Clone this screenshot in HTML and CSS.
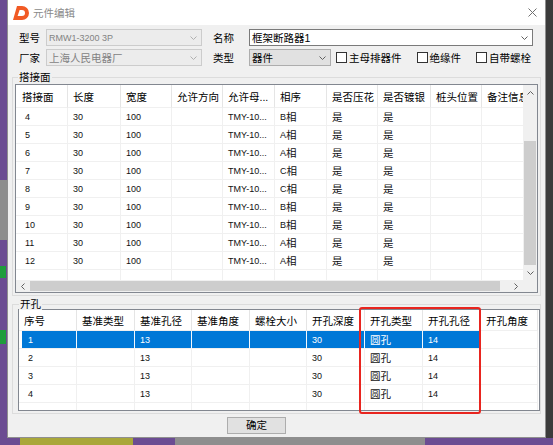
FILE: index.html
```html
<!DOCTYPE html>
<html>
<head>
<meta charset="utf-8">
<link rel="stylesheet" href="styles.css">
</head>
<body>
<div class="desktop">
  <div class="mark mark1"></div>
  <div class="mark mark2"></div>
  <div class="dialog">
    <div class="titlebar">
      <svg class="logo" width="16" height="14" viewBox="0 0 16 14"><path fill="#f15a24" fill-rule="evenodd" d="M4 0 H9 A7 7 0 0 1 9 14 H0 Z M6.6 4 H9 A3 3 0 0 1 9 10 H4.6 Z"/></svg>
      <span class="title">元件编辑</span>
      <svg class="close" width="9" height="9" viewBox="0 0 9 9"><path d="M0.5 0.5 L8.5 8.5 M8.5 0.5 L0.5 8.5" stroke="#707070" stroke-width="1" fill="none"/></svg>
    </div>

    <div class="form">
      <div class="frow">
        <span class="lbl">型号</span>
        <div class="combo dis w156"><span class="ctext n">RMW1-3200 3P</span><svg class="arrow" width="7" height="4" viewBox="0 0 7 4"><path d="M0.5 0.5 L3.5 3.5 L6.5 0.5" stroke="#b0b0b0" fill="none"/></svg></div>
        <span class="lbl lbl2">名称</span>
        <div class="combo edit w284"><span class="ctext">框架断路器1</span><svg class="arrow" width="7" height="4" viewBox="0 0 7 4"><path d="M0.5 0.5 L3.5 3.5 L6.5 0.5" stroke="#606060" fill="none"/></svg></div>
      </div>
      <div class="frow">
        <span class="lbl">厂家</span>
        <div class="combo dis w156"><span class="ctext">上海人民电器厂</span><svg class="arrow" width="7" height="4" viewBox="0 0 7 4"><path d="M0.5 0.5 L3.5 3.5 L6.5 0.5" stroke="#b0b0b0" fill="none"/></svg></div>
        <span class="lbl lbl2">类型</span>
        <div class="combo drop w82"><span class="ctext">器件</span><svg class="arrow" width="7" height="4" viewBox="0 0 7 4"><path d="M0.5 0.5 L3.5 3.5 L6.5 0.5" stroke="#606060" fill="none"/></svg></div>
        <div class="checks">
          <label class="chk"><span class="box"></span>主母排器件</label>
          <label class="chk"><span class="box"></span>绝缘件</label>
          <label class="chk"><span class="box"></span>自带螺栓</label>
        </div>
      </div>
    </div>

    <div class="group g1">
      <span class="legend">搭接面</span>
      <div class="list1">
        <div class="viewport">
          <div class="r hdr">
            <div class="c c1">搭接面</div><div class="c">长度</div><div class="c">宽度</div><div class="c">允许方向</div><div class="c">允许母...</div><div class="c">相序</div><div class="c">是否压花</div><div class="c">是否镀银</div><div class="c">桩头位置</div><div class="c">备注信息</div>
          </div>
          <div class="r"><div class="c c1 n">4</div><div class="c n">30</div><div class="c n">100</div><div class="c"></div><div class="c n">TMY-10...</div><div class="c"><span class="n">B</span>相</div><div class="c">是</div><div class="c">是</div><div class="c"></div><div class="c"></div></div>
          <div class="r"><div class="c c1 n">5</div><div class="c n">30</div><div class="c n">100</div><div class="c"></div><div class="c n">TMY-10...</div><div class="c"><span class="n">A</span>相</div><div class="c">是</div><div class="c">是</div><div class="c"></div><div class="c"></div></div>
          <div class="r"><div class="c c1 n">6</div><div class="c n">30</div><div class="c n">100</div><div class="c"></div><div class="c n">TMY-10...</div><div class="c"><span class="n">A</span>相</div><div class="c">是</div><div class="c">是</div><div class="c"></div><div class="c"></div></div>
          <div class="r"><div class="c c1 n">7</div><div class="c n">30</div><div class="c n">100</div><div class="c"></div><div class="c n">TMY-10...</div><div class="c"><span class="n">C</span>相</div><div class="c">是</div><div class="c">是</div><div class="c"></div><div class="c"></div></div>
          <div class="r"><div class="c c1 n">8</div><div class="c n">30</div><div class="c n">100</div><div class="c"></div><div class="c n">TMY-10...</div><div class="c"><span class="n">C</span>相</div><div class="c">是</div><div class="c">是</div><div class="c"></div><div class="c"></div></div>
          <div class="r"><div class="c c1 n">9</div><div class="c n">30</div><div class="c n">100</div><div class="c"></div><div class="c n">TMY-10...</div><div class="c"><span class="n">B</span>相</div><div class="c">是</div><div class="c">是</div><div class="c"></div><div class="c"></div></div>
          <div class="r"><div class="c c1 n">10</div><div class="c n">30</div><div class="c n">100</div><div class="c"></div><div class="c n">TMY-10...</div><div class="c"><span class="n">B</span>相</div><div class="c">是</div><div class="c">是</div><div class="c"></div><div class="c"></div></div>
          <div class="r"><div class="c c1 n">11</div><div class="c n">30</div><div class="c n">100</div><div class="c"></div><div class="c n">TMY-10...</div><div class="c"><span class="n">A</span>相</div><div class="c">是</div><div class="c">是</div><div class="c"></div><div class="c"></div></div>
          <div class="r"><div class="c c1 n">12</div><div class="c n">30</div><div class="c n">100</div><div class="c"></div><div class="c n">TMY-10...</div><div class="c"><span class="n">A</span>相</div><div class="c">是</div><div class="c">是</div><div class="c"></div><div class="c"></div></div>
          <div class="r"><div class="c c1"></div><div class="c"></div><div class="c"></div><div class="c"></div><div class="c"></div><div class="c"></div><div class="c"></div><div class="c"></div><div class="c"></div><div class="c"></div></div>
        </div>
        <div class="vscroll">
          <div class="sbtn v"><svg width="7" height="4" viewBox="0 0 7 4"><path d="M0.5 3.5 L3.5 0.5 L6.5 3.5" stroke="#606060" fill="none"/></svg></div>
          <div class="vtrack1"></div>
          <div class="vthumb"></div>
          <div class="sbtn v"><svg width="7" height="4" viewBox="0 0 7 4"><path d="M0.5 0.5 L3.5 3.5 L6.5 0.5" stroke="#606060" fill="none"/></svg></div>
        </div>
        <div class="hscroll">
          <div class="sbtn h"><svg width="4" height="7" viewBox="0 0 4 7"><path d="M3.5 0.5 L0.5 3.5 L3.5 6.5" stroke="#606060" fill="none"/></svg></div>
          <div class="hthumb"></div>
          <div class="htrack"></div>
          <div class="sbtn h"><svg width="4" height="7" viewBox="0 0 4 7"><path d="M0.5 0.5 L3.5 3.5 L0.5 6.5" stroke="#606060" fill="none"/></svg></div>
        </div>
        <div class="corner"></div>
      </div>
    </div>

    <div class="group g2">
      <span class="legend">开孔</span>
      <div class="list2">
        <div class="r hdr">
          <div class="c c1">序号</div><div class="c">基准类型</div><div class="c">基准孔径</div><div class="c">基准角度</div><div class="c">螺栓大小</div><div class="c">开孔深度</div><div class="c">开孔类型</div><div class="c">开孔孔径</div><div class="c">开孔角度</div>
        </div>
        <div class="r sel"><div class="c c1 n">1</div><div class="c"></div><div class="c n">13</div><div class="c"></div><div class="c"></div><div class="c n">30</div><div class="c">圆孔</div><div class="c n">14</div><div class="c"></div></div>
        <div class="r"><div class="c c1 n">2</div><div class="c"></div><div class="c n">13</div><div class="c"></div><div class="c"></div><div class="c n">30</div><div class="c">圆孔</div><div class="c n">14</div><div class="c"></div></div>
        <div class="r"><div class="c c1 n">3</div><div class="c"></div><div class="c n">13</div><div class="c"></div><div class="c"></div><div class="c n">30</div><div class="c">圆孔</div><div class="c n">14</div><div class="c"></div></div>
        <div class="r"><div class="c c1 n">4</div><div class="c"></div><div class="c n">13</div><div class="c"></div><div class="c"></div><div class="c n">30</div><div class="c">圆孔</div><div class="c n">14</div><div class="c"></div></div>
        <div class="r"><div class="c c1"></div><div class="c"></div><div class="c"></div><div class="c"></div><div class="c"></div><div class="c"></div><div class="c"></div><div class="c"></div><div class="c"></div></div>
      </div>
    </div>

    <div class="btnrow"><button class="btn">确定</button></div>
  </div>
  <div class="redbox"></div>
</div>
</body>
</html>
```

FILE: styles.css
```css
* { box-sizing: border-box; margin: 0; padding: 0; }
html, body { width: 553px; height: 445px; overflow: hidden; }
body {
  font-family: "Liberation Sans", "Noto Sans CJK SC", sans-serif;
  font-size: 10.5px;
  color: #000;
}
.desktop {
  position: relative;
  width: 553px;
  height: 445px;
  background:
    linear-gradient(to right, #6b4c92 0 20px, #a9a73a 20px 133px, #6b4c92 133px 175px, #8e8e8e 175px 425px, #6b4c92 425px) left bottom / 100% 7px no-repeat,
    linear-gradient(#6b4c92 0 180px, #8d8d8d 180px 240px, #6b4c92 240px) left top / 7px 100% no-repeat,
    #3b3b3b;
}
.mark { position: absolute; left: 0; width: 6px; background: #1f9d3c; }
.mark1 { top: 266px; height: 12px; }
.mark2 { top: 330px; height: 14px; }

.dialog {
  position: absolute;
  left: 7px;
  top: 0;
  width: 539px;
  height: 438px;
  background: #f0f0f0;
  border: 1px solid #8f8f8f;
  border-top: none;
  display: flex;
  flex-direction: column;
}
.titlebar {
  height: 25px;
  background: #fff;
  display: flex;
  align-items: center;
  padding-left: 5px;
  flex: none;
}
.logo { display: block; }
.title { margin-left: 4px; color: #8a8a8a; font-size: 10.5px; }
.close { margin-left: auto; margin-right: 8px; display: block; }

.form {
  margin-top: 4px;
  display: flex;
  flex-direction: column;
  gap: 3px;
  padding-left: 11px;
}
.frow { display: flex; align-items: center; height: 17px; }
.lbl { width: 27px; flex: none; }
.lbl2 { width: 36px; margin-left: 11px; }
.combo {
  height: 17px;
  display: flex;
  align-items: center;
  padding-left: 2px;
  border: 1px solid #7a7a7a;
  flex: none;
  white-space: nowrap;
  overflow: hidden;
}
.combo .arrow { margin-left: auto; margin-right: 4px; flex: none; }
.w156 { width: 156px; }
.w284 { width: 284px; }
.w82 { width: 82px; }
.dis { background: #ececec; border-color: #cccccc; color: #838383; }
.edit { background: #fff; }
.drop { background: #e1e1e1; border-color: #adadad; }

.checks { display: flex; gap: 15px; margin-left: 5px; }
.chk { display: flex; align-items: center; }
.box {
  width: 11px;
  height: 11px;
  border: 1px solid #333;
  background: #fff;
  margin-right: 2px;
}

.group {
  position: relative;
  border: 1px solid #dcdcdc;
  margin-left: 4px;
  width: 529px;
  flex: none;
}
.legend {
  position: absolute;
  top: -7px;
  background: #f0f0f0;
  padding: 0 1px;
  line-height: 12px;
}
.g1 { margin-top: 11px; padding: 6px 2px 2px; height: 219px; }
.g1 .legend { left: 5px; }
.g2 { margin-top: 8px; padding: 4px 0 2px 5px; height: 110px; }
.g2 .legend { left: 6px; }

.n { font-size: 9px; }

.list1 {
  width: 523px;
  height: 209px;
  border: 1px solid #828790;
  background: #fff;
  display: grid;
  grid-template-columns: 507px 14px;
  grid-template-rows: 195px 12px;
}
.viewport { overflow: hidden; }
.r { display: grid; height: 18px; }
.list1 .r { grid-template-columns: 52px 53px 51px 51px 52px 52px 51px 53px 51px 52px; width: 518px; }
.list1 .hdr { height: 23px; }
.c {
  display: flex;
  align-items: center;
  padding-left: 5px;
  white-space: nowrap;
  overflow: hidden;
  border-right: 1px solid #f0f0f0;
  border-bottom: 1px solid #f0f0f0;
  color: #111;
}
.c1 { padding-left: 9px; }
.hdr .c { border-right-color: #e5e5e5; color: #000; }
.hdr .c1 { padding-left: 6px; }

.vscroll { background: #f0f0f0; display: flex; flex-direction: column; }
.sbtn { display: flex; align-items: center; justify-content: center; flex: none; }
.sbtn.v { height: 15px; }
.sbtn.h { width: 14px; }
.vtrack1 { height: 41px; }
.vthumb { height: 124px; background: #cdcdcd; margin: 0 1px; }
.hscroll { background: #f0f0f0; display: flex; }
.hthumb { width: 470px; background: #cdcdcd; margin: 1px 0; }
.htrack { width: 9px; }
.corner { background: #f0f0f0; }

.list2 {
  width: 522px;
  height: 102px;
  border: 1px solid #828790;
  background: #fff;
  overflow: hidden;
}
.list2 .r { grid-template-columns: 58px 58px 57px 58px 57px 58px 58px 58px 57px; }
.list2 .hdr { height: 21px; }
.list2 .hdr .c1 { padding-left: 5px; }
.sel .c { background: #0078d7; color: #fff; border-right-color: #f4f8fc; }
.sel .c1 { background: linear-gradient(to right, #fff 3px, #0078d7 3px); }
.sel .c:last-child { background: #fff; border-right-color: #f0f0f0; }

.btnrow { margin-top: 3px; display: flex; }
.btn {
  margin-left: 219px;
  width: 59px;
  height: 17px;
  background: #e1e1e1;
  border: 1px solid #adadad;
  font-family: "Liberation Sans", "Noto Sans CJK SC", sans-serif;
  font-size: 10.5px;
  color: #000;
  line-height: 15px;
}

.redbox {
  position: absolute;
  left: 359px;
  top: 307px;
  width: 122px;
  height: 107px;
  border: 2px solid #e8251f;
  border-radius: 3px;
}
```
